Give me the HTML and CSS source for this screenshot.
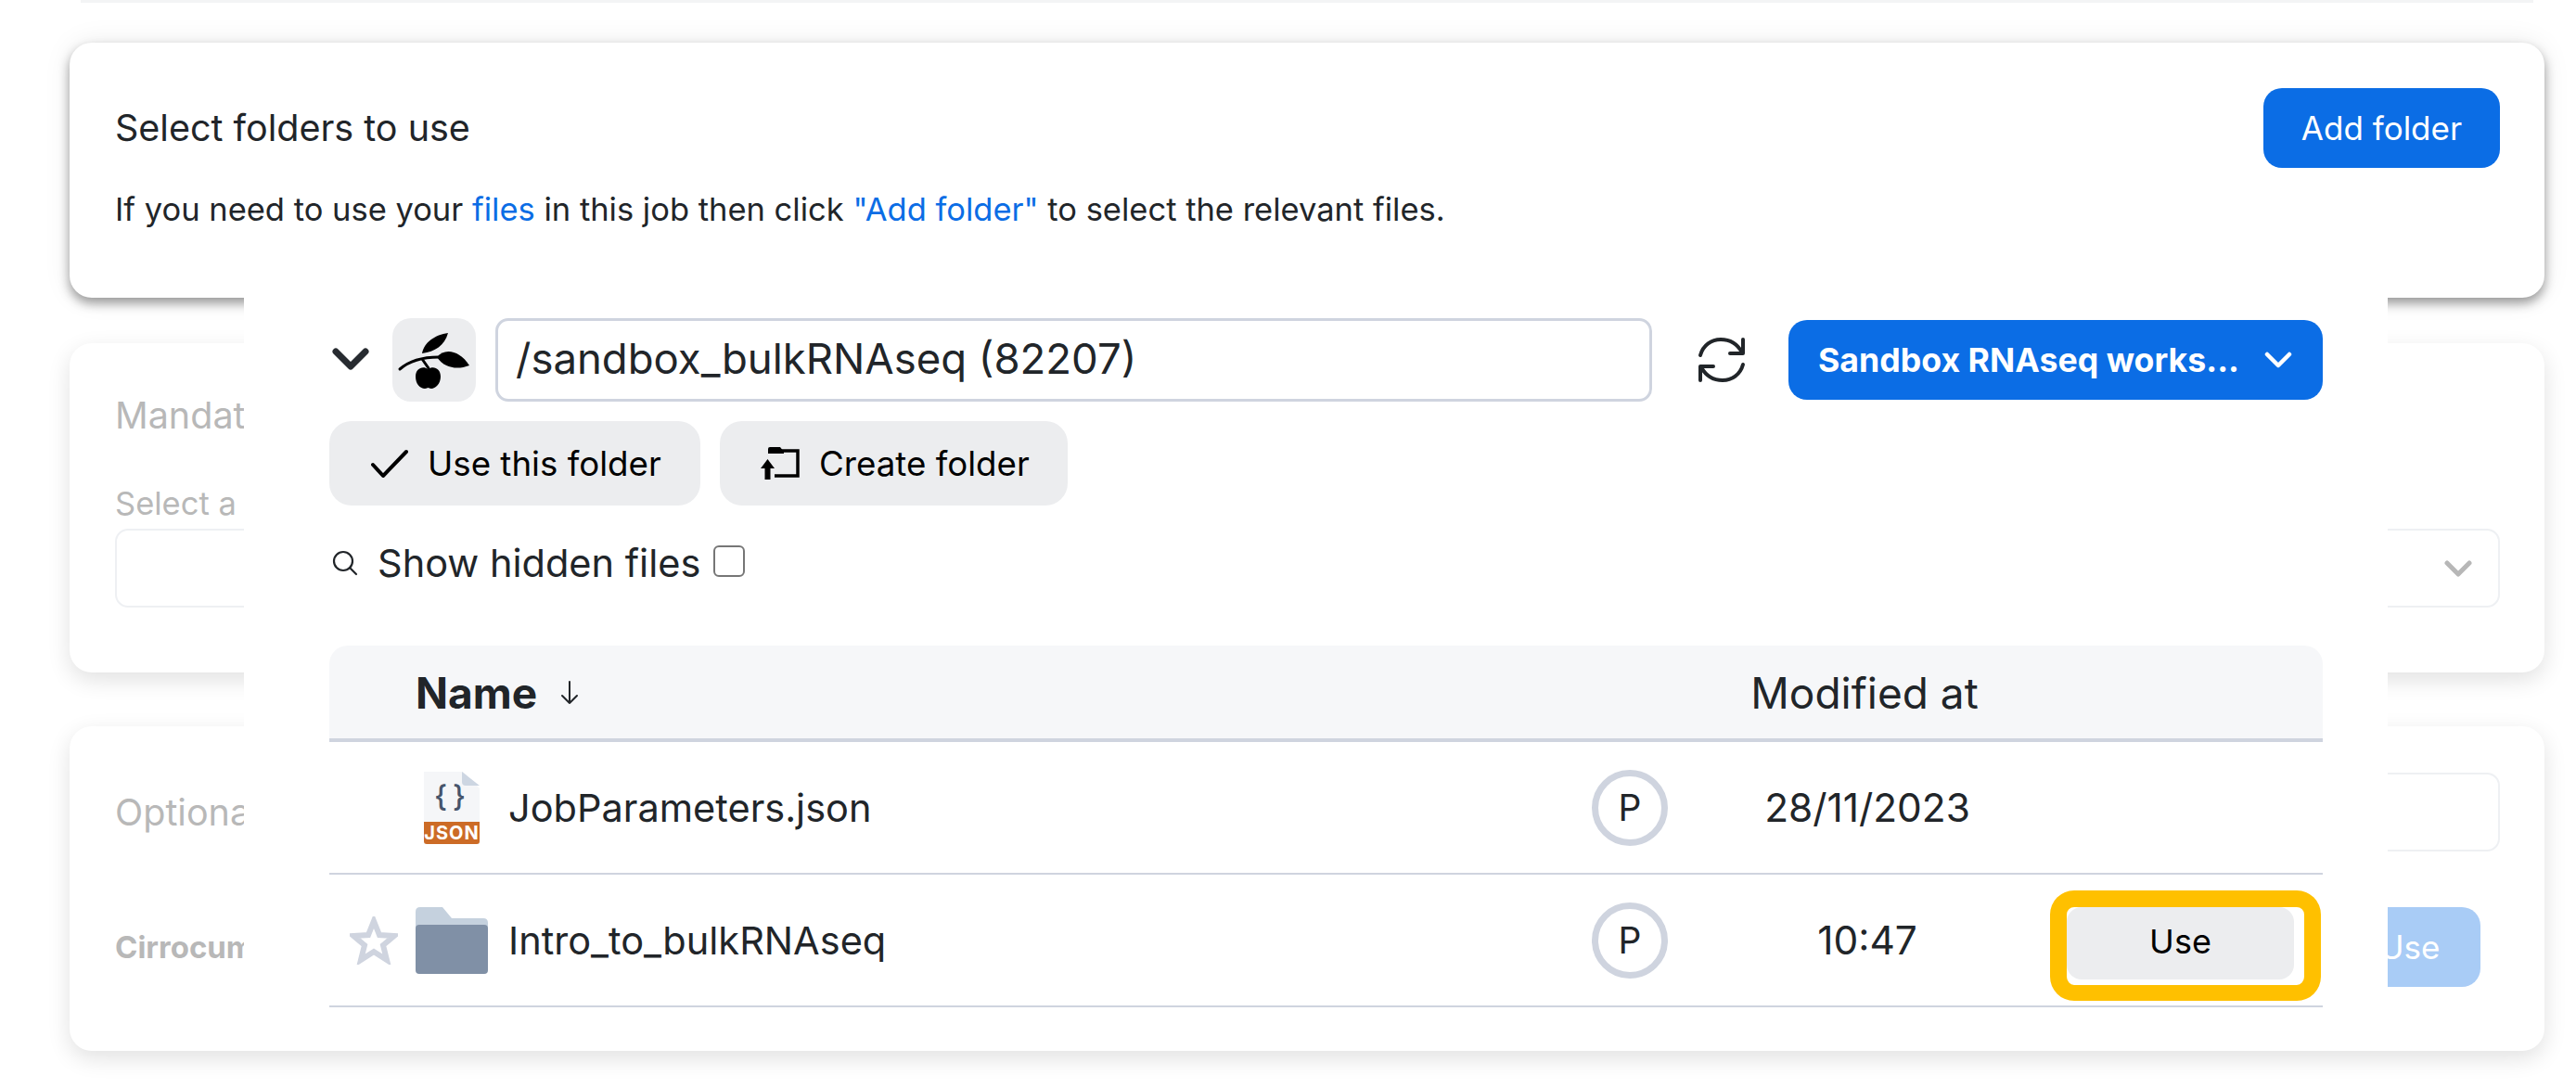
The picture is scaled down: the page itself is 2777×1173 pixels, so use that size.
FILE: index.html
```html
<!DOCTYPE html>
<html>

<head>
	<meta charset="UTF-8">
	<title>Select folders</title>
	<link rel="stylesheet" href="styles.css">
</head>

<body>
	<div class="page">
		<div class="sliver"></div>

		<div class="card card-active">
			<div class="card-head">
				<div class="card-title">Select folders to use</div>
				<button class="btn-blue">Add folder</button>
			</div>
			<p class="card-text">If you need to use your <a>files</a> in this job then click <a>"Add folder"</a> to select the relevant files.</p>
		</div>

		<div class="card card-dim card-mandatory">
			<div class="card-title">Mandatory</div>
			<div class="field-label">Select a</div>
			<div class="field">
				<svg class="field-chevron" width="30" height="18" viewBox="0 0 30 18"><path d="M3 3l12 12L27 3" fill="none" stroke="#333" stroke-width="5" stroke-linecap="round" stroke-linejoin="round"/></svg>
			</div>
		</div>

		<div class="card card-dim card-optional">
			<div class="optional-row">
				<div class="card-title">Optional</div>
				<div class="field field-short"></div>
			</div>
			<div class="use-row">
				<b>Cirrocumulus</b>
				<button class="btn-use-dim">Use</button>
			</div>
		</div>
	</div>

	<!--folder picker-->
	<div class="modal">
		<div class="path-row">
			<svg class="chevron" width="40" height="26" viewBox="0 0 40 26"><path d="M4 4l16 16L36 4" fill="none" stroke="#272b30" stroke-width="7" stroke-linecap="round" stroke-linejoin="round"/></svg>
			<div class="logo-box">
				<svg width="90" height="90" viewBox="0 0 90 90">
					<path d="M60 16C46 18 34 26 32 38C46 36 56 30 60 16Z"/>
					<path d="M48 42C56 32 72 34 83 51C70 56 56 54 48 42Z"/>
					<path d="M8 55C16 48 30 42 50 42M32 44L39 54" fill="none" stroke="#000" stroke-width="3" stroke-linecap="round"/>
					<path d="M38.5 55C44 51 52 54 52 63C52 71 46 76 42 76C40 76 39.5 75 38.5 75C37.5 75 37 76 35 76C30 76 25 71 25 63C25 54 33 51 38.5 55Z"/>
				</svg>
			</div>
			<div class="path-input">/sandbox_bulkRNAseq (82207)</div>
			<svg class="refresh" width="54" height="50" viewBox="0 0 54 50">
				<path d="M4 20C7 9 16 3 26 3C36 3 44 8 49 17M50 3V18H36M50 30C47 41 38 47 28 47C18 47 10 42 5 33M4 47V32H18" fill="none" stroke="#212529" stroke-width="4" stroke-linecap="round" stroke-linejoin="round"/>
			</svg>
			<button class="btn-workspace">
				<span>Sandbox RNAseq works...</span>
				<svg width="30" height="18" viewBox="0 0 30 18"><path d="M3 3l12 12L27 3" fill="none" stroke="#fff" stroke-width="4.5" stroke-linecap="round" stroke-linejoin="round"/></svg>
			</button>
		</div>

		<div class="action-row">
			<button class="btn-grey btn-usefolder">
				<svg width="40" height="32" viewBox="0 0 40 32"><path d="M2 17l11 12L38 3" fill="none" stroke="#000" stroke-width="4" stroke-linecap="round" stroke-linejoin="round"/></svg>
				Use this folder
			</button>
			<button class="btn-grey btn-createfolder">
				<svg width="42" height="35" viewBox="0 0 42 35">
					<path d="M16 4H40V31H15" fill="none" stroke="#000" stroke-width="3.5"/>
					<path d="M8 2Q8 0 10 0H21L25 5V7H8Z"/>
					<path d="M0 23L7.5 13L15 23H10.5V35H4.5V23Z"/>
				</svg>
				Create folder
			</button>
		</div>

		<div class="hidden-row">
			<svg width="28" height="28" viewBox="0 0 28 28"><circle cx="12" cy="12" r="10" fill="none" stroke="#212529" stroke-width="2.2"/><path d="M19 19l7 7" stroke="#212529" stroke-width="2.2" stroke-linecap="round"/></svg>
			<span class="hidden-label">Show hidden files</span>
			<span class="checkbox"></span>
		</div>

		<div class="table">
			<div class="table-head">
				<div class="col-star"></div>
				<div class="col-name head-name">Name
					<svg width="20" height="26" viewBox="0 0 20 26"><path d="M10 1V24M2 16l8 8 8-8" fill="none" stroke="#212529" stroke-width="2" stroke-linecap="round" stroke-linejoin="round"/></svg>
				</div>
				<div class="col-avatar"></div>
				<div class="col-date col-date-head">Modified at</div>
			</div>

			<div class="table-row">
				<div class="col-star"></div>
				<div class="col-name">
					<svg class="json-icon" width="60" height="78" viewBox="0 0 60 78">
						<path d="M0 0H42L60 18V78H0Z" fill="#f5f6f8"/>
						<path d="M41 0L60 15H45Q41 15 41 11Z" fill="#cdd6e2"/>
						<path d="M0 54H60V75Q60 78 57 78H3Q0 78 0 75Z" fill="#cc6b26"/>
						<text x="30" y="73" class="json-text" text-anchor="middle">JSON</text>
						<text x="31" y="38" class="json-brace" text-anchor="middle">{}</text>
					</svg>
					<span>JobParameters.json</span>
				</div>
				<div class="col-avatar"><span class="avatar">P</span></div>
				<div class="col-date">28/11/2023</div>
			</div>

			<div class="table-row">
				<div class="col-star">
					<svg width="52" height="52" viewBox="0 0 52 52"><path d="M26 5L32 20L48 21L36 31L40 47L26 38L12 47L16 31L4 21L20 20Z" fill="none" stroke="#cfd4df" stroke-width="6" stroke-linejoin="miter"/></svg>
				</div>
				<div class="col-name">
					<svg class="folder-icon" width="78" height="72" viewBox="0 0 78 72">
						<path d="M0 66V5Q0 0 5 0H29L39 12H73Q78 12 78 17V66Z" fill="#c5d1de"/>
						<path d="M0 23Q0 19 4 19H74Q78 19 78 23V68Q78 72 74 72H4Q0 72 0 68Z" fill="#8090a6"/>
					</svg>
					<span>Intro_to_bulkRNAseq</span>
				</div>
				<div class="col-avatar"><span class="avatar">P</span></div>
				<div class="col-date">10:47</div>
				<div class="col-action">
					<button class="btn-row-use">Use</button>
					<div class="highlight"></div>
				</div>
			</div>
		</div>
	</div>
</body>

</html>
```

FILE: styles.css
```css
* {
	margin: 0;
	padding: 0;
	box-sizing: border-box;
}

html,
body {
	height: 100%;
	overflow: hidden;
	background-color: #fff;
}

body {
	font-family: Inter, "Noto Sans", sans-serif;
	color: #212529;
	position: relative;
}

button {
	font-family: inherit;
	border: 0;
}

.page {
	padding: 0 34px 0 75px;
}

.sliver {
	height: 3px;
	margin: 0 12px 43px 12px;
	background-color: #f3f4f5;
	box-shadow: 0 6px 30px rgba(0, 0, 0, 0.03);
}

.card {
	background-color: #fff;
	border-radius: 24px;
	margin-bottom: 49px;
	padding: 0 48px 0 49px;
}

.card-active {
	height: 275px;
	padding-top: 49px;
	box-shadow: 0 6px 12px rgba(0, 0, 0, 0.38), 0 0 30px rgba(0, 0, 0, 0.08);
}

.card-head {
	display: flex;
	justify-content: space-between;
	align-items: center;
}

.card-title {
	font-size: 39.5px;
}

.btn-blue {
	width: 255px;
	height: 86px;
	border-radius: 20px;
	background-color: #0b6de5;
	color: #fff;
	font-size: 35px;
}

.card-text {
	font-size: 34.5px;
	margin-top: 24px;
}

.card-text a {
	color: #0b6de5;
}

.card-dim {
	box-shadow: 0 8px 24px rgba(0, 0, 0, 0.12);
	color: #b8b8b8;
}

.card-mandatory {
	height: 355px;
	margin-bottom: 58px;
	padding-top: 54px;
}

.field-label {
	font-size: 34.5px;
	margin-top: 50px;
}

.field {
	height: 85px;
	margin-top: 7px;
	border: 2px solid #eef0f3;
	border-radius: 14px;
	display: flex;
	justify-content: flex-end;
	align-items: center;
	padding-right: 28px;
}

.field-chevron {
	opacity: 0.35;
}

.card-optional {
	height: 350px;
	padding-top: 50px;
}

.optional-row {
	display: flex;
	justify-content: space-between;
	align-items: center;
}

.field-short {
	width: 300px;
	margin-top: 0;
}

.use-row {
	display: flex;
	justify-content: space-between;
	align-items: center;
	margin-top: 60px;
	padding-right: 21px;
	font-size: 33px;
}

.btn-use-dim {
	width: 152px;
	height: 86px;
	border-radius: 20px;
	background-color: #a9ccf6;
	color: #fff;
	font-size: 35px;
}

/* folder picker, lies over the cards */
.modal {
	position: absolute;
	left: 263px;
	top: 321px;
	width: 2311px;
	height: 812px;
	background-color: #fff;
	padding: 22px 70px 0 92px;
}

.path-row {
	display: flex;
	align-items: center;
}

.chevron {
	margin: 0 25px 0 3px;
}

.logo-box {
	width: 90px;
	height: 90px;
	border-radius: 20px;
	background-color: #ecedef;
	margin-right: 21px;
}

.path-input {
	width: 1247px;
	height: 90px;
	border: 3px solid #cfd4df;
	border-radius: 14px;
	font-size: 45.5px;
	line-height: 82px;
	padding-left: 19px;
	margin-right: 48px;
}

.refresh {
	margin-right: 45px;
}

.btn-workspace {
	width: 576px;
	height: 86px;
	border-radius: 20px;
	background-color: #0b6de5;
	color: #fff;
	font-size: 35.7px;
	font-weight: 700;
	display: flex;
	align-items: center;
	padding-left: 32px;
	gap: 27px;
}

.action-row {
	display: flex;
	gap: 21px;
	margin-top: 21px;
}

.btn-grey {
	height: 91px;
	border-radius: 24px;
	background-color: #ecedef;
	color: #000;
	font-size: 36.7px;
	display: flex;
	align-items: center;
	gap: 21px;
}

.btn-usefolder {
	width: 400px;
	padding-left: 45px;
}

.btn-createfolder {
	width: 375px;
	padding-left: 44px;
}

.hidden-row {
	display: flex;
	align-items: center;
	margin-top: 40px;
	height: 44px;
	padding-left: 3px;
}

.hidden-label {
	font-size: 41.5px;
	margin-left: 21px;
}

.checkbox {
	width: 34px;
	height: 34px;
	border: 2px solid #767676;
	border-radius: 6px;
	margin-left: 14px;
	margin-bottom: 4px;
}

.table {
	margin-top: 67px;
}

.table-head {
	height: 104px;
	display: flex;
	align-items: center;
	padding-top: 2px;
	background-color: #f6f7f9;
	border-bottom: 4px solid #cfd4df;
	border-radius: 20px 20px 0 0;
	font-size: 46px;
}

.table-row {
	height: 143px;
	display: flex;
	align-items: center;
	border-bottom: 2px solid #cfd4df;
	font-size: 41.5px;
}

.col-star {
	width: 93px;
	display: flex;
	justify-content: center;
	padding-left: 3px;
	flex-shrink: 0;
}

.col-name {
	width: 1268px;
	display: flex;
	align-items: center;
	gap: 22px;
	flex-shrink: 0;
}

.head-name {
	font-weight: 700;
	gap: 25px;
}

.col-avatar {
	width: 82px;
	flex-shrink: 0;
}

.avatar {
	display: block;
	width: 82px;
	height: 82px;
	line-height: 68px;
	border: 7px solid #cfd4df;
	border-radius: 50%;
	text-align: center;
	font-size: 39px;
}

.col-date {
	width: 430px;
	text-align: center;
	flex-shrink: 0;
	font-size: 42.4px;
}

.col-date-head {
	font-size: 46px;
	padding-right: 6px;
}

.json-icon {
	margin: 0 9px;
}

.json-text {
	font-size: 20px;
	font-weight: 700;
	letter-spacing: 1px;
	fill: #fff;
}

.json-brace {
	font-size: 32px;
	font-weight: 500;
	letter-spacing: 6px;
	fill: #46546b;
}

.col-action {
	position: relative;
	padding-top: 6px;
}

.btn-row-use {
	display: block;
	width: 245px;
	height: 78px;
	padding-bottom: 4px;
	border-radius: 16px;
	background-color: #ecedef;
	color: #000;
	font-size: 36px;
}

/* yellow marker drawn around the button */
.highlight {
	position: absolute;
	left: -18px;
	top: -12px;
	width: 292px;
	height: 119px;
	border: solid #ffc000;
	border-width: 18px 18px 17px 18px;
	border-radius: 26px;
}
```
